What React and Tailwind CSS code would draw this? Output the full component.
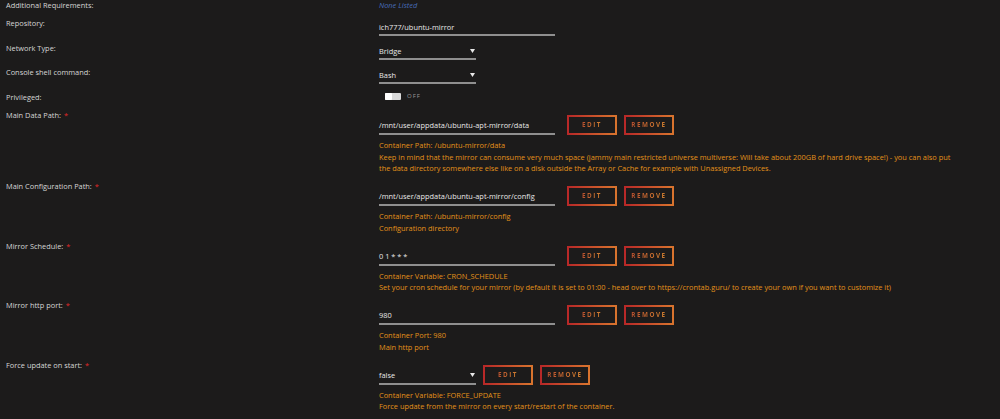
import React from "react";

const FONT = { fontFamily: '"Open Sans", "Noto Sans", "Liberation Sans", sans-serif' };

function Label({ children, required }) {
  return (
    <div className="w-[379px] shrink-0 pl-[6px] leading-[12px] text-[7.4px] text-[#d6d6d6]">
      {children}
      {required && <span className="text-[#e22828] ml-[3px]">*</span>}
    </div>
  );
}

function Btn({ children }) {
  return (
    <div className="h-[20px] w-[50px] shrink-0 flex items-center justify-center border-2 border-solid [border-image:linear-gradient(90deg,#b82828,#d8742e)_1]">
      <span className="text-[6.3px] font-bold tracking-[1.5px] uppercase bg-gradient-to-r from-[#b8502e] to-[#d0802e] bg-clip-text text-transparent">
        {children}
      </span>
    </div>
  );
}

function Arrow() {
  return (
    <svg width="5" height="4" viewBox="0 0 5 4" className="mr-[1px]">
      <path d="M0 0 L5 0 L2.5 4 Z" fill="#e8e8e8" />
    </svg>
  );
}

function Help({ lines }) {
  return (
    <div className="mt-[5px] text-[7.4px] leading-[11.5px] text-[#e3921a]">
      {lines.map((l, i) => (
        <div key={i}>{l}</div>
      ))}
    </div>
  );
}

function PathRow({ label, value, lines, select, first }) {
  return (
    <div className={"flex " + (first ? "" : "mt-[5.5px]")}>
      <Label required>{label}</Label>
      <div className="pt-[6px]">
        <div className="flex items-end">
          {select ? (
            <div className="h-[18px] w-[97px] border-b-2 border-[#8f8f8f] flex items-start justify-between">
              <span className="leading-[16px] text-[7.4px] text-[#e8e8e8]">{value}</span>
              <div className="pt-[6px]"><Arrow /></div>
            </div>
          ) : (
            <div className="h-[18px] w-[176px] border-b-2 border-[#8f8f8f] leading-[16px] text-[7.4px] text-[#e8e8e8]">
              {value}
            </div>
          )}
          <div className={"flex gap-[7px] " + (select ? "ml-[7px]" : "ml-[12px]")}>
            <Btn>Edit</Btn>
            <Btn>Remove</Btn>
          </div>
        </div>
        <Help lines={lines} />
      </div>
    </div>
  );
}

export default function App() {
  return (
    <div className="w-[1000px] h-[419px] bg-[#1c1b1b] overflow-hidden" style={FONT}>
      {/* Additional Requirements */}
      <div className="flex h-[17px]">
        <div className="w-[379px] shrink-0 pl-[6px] leading-[11px] text-[7.4px] text-[#d6d6d6]">Additional Requirements:</div>
        <div className="leading-[11px] text-[7.4px] italic text-[#486dba]">None Listed</div>
      </div>
      {/* Repository */}
      <div className="flex h-[25px]">
        <Label>Repository:</Label>
        <div className="mt-[3px] h-[16px] w-[176px] border-b-2 border-[#8f8f8f] leading-[14px] text-[7.4px] text-[#e8e8e8]">
          ich777/ubuntu-mirror
        </div>
      </div>
      {/* Network Type */}
      <div className="flex h-[24px]">
        <Label>Network Type:</Label>
        <div className="mt-[2px] h-[16px] w-[97px] border-b-2 border-[#8f8f8f] flex items-start justify-between">
          <span className="leading-[14px] text-[7.4px] text-[#e8e8e8]">Bridge</span>
          <div className="pt-[5px]"><Arrow /></div>
        </div>
      </div>
      {/* Console */}
      <div className="flex h-[25px]">
        <Label>Console shell command:</Label>
        <div className="mt-[2px] h-[16px] w-[97px] border-b-2 border-[#8f8f8f] flex items-start justify-between">
          <span className="leading-[14px] text-[7.4px] text-[#e8e8e8]">Bash</span>
          <div className="pt-[5px]"><Arrow /></div>
        </div>
      </div>
      {/* Privileged */}
      <div className="flex h-[18px]">
        <Label>Privileged:</Label>
        <div className="mt-[1px] ml-[6px] flex items-center h-[8px]">
          <div className="w-[16px] h-[7px] bg-[#d9d9d9] rounded-[1px] flex">
            <div className="w-[7px] h-[7px] bg-white rounded-[1px]" />
          </div>
          <span className="ml-[6px] text-[6px] tracking-[1px] text-[#9a9a9a] leading-[8px]">OFF</span>
        </div>
      </div>

      <PathRow
        first
        label="Main Data Path:"
        value="/mnt/user/appdata/ubuntu-apt-mirror/data"
        lines={[
          "Container Path: /ubuntu-mirror/data",
          "Keep in mind that the mirror can consume very much space (jammy main restricted universe multiverse: Will take about 200GB of hard drive space!) - you can also put",
          "the data directory somewhere else like on a disk outside the Array or Cache for example with Unassigned Devices.",
        ]}
      />
      <PathRow
        label="Main Configuration Path:"
        value="/mnt/user/appdata/ubuntu-apt-mirror/config"
        lines={["Container Path: /ubuntu-mirror/config", "Configuration directory"]}
      />
      <PathRow
        label="Mirror Schedule:"
        value="0 1 * * *"
        lines={[
          "Container Variable: CRON_SCHEDULE",
          "Set your cron schedule for your mirror (by default it is set to 01:00 - head over to https://crontab.guru/ to create your own if you want to customize it)",
        ]}
      />
      <PathRow
        label="Mirror http port:"
        value="980"
        lines={["Container Port: 980", "Main http port"]}
      />
      <PathRow
        select
        label="Force update on start:"
        value="false"
        lines={["Container Variable: FORCE_UPDATE", "Force update from the mirror on every start/restart of the container."]}
      />
    </div>
  );
}
